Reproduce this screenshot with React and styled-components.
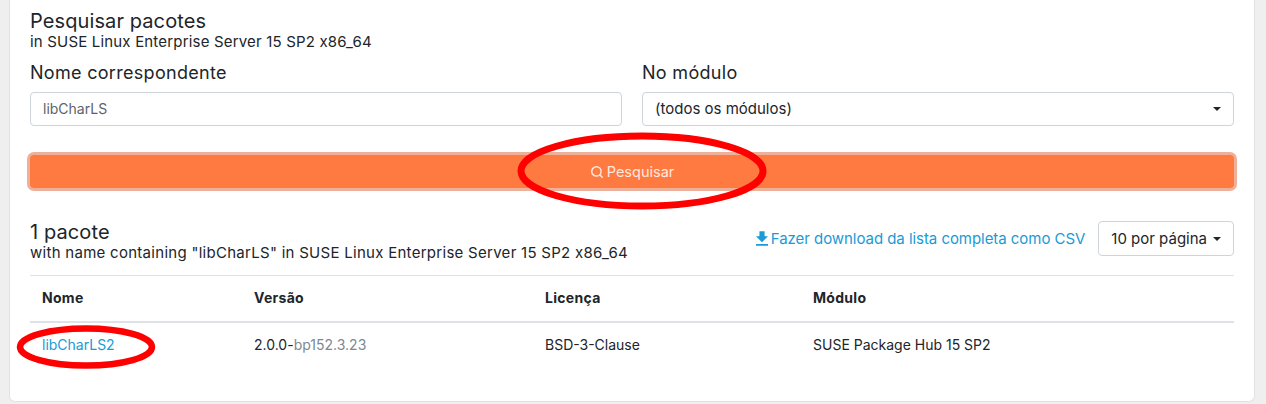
import React from 'react';
import styled, { createGlobalStyle } from 'styled-components';
import { Search } from 'lucide-react';

const GlobalStyle = createGlobalStyle`
  html, body {
    margin: 0;
    padding: 0;
    background: #efefef;
  }
  * { box-sizing: border-box; }
  body {
    font-family: "Inter", "Open Sans", sans-serif;
    color: #212529;
    overflow: hidden;
  }
`;

const Page = styled.div`
  position: relative;
  width: 1266px;
  height: 404px;
  padding: 0 11px 2px 9px;
  overflow: hidden;
`;

const Card = styled.main`
  height: 402px;
  background: #fff;
  border: 1px solid #e2e2e2;
  border-top: 0;
  border-radius: 0 0 6px 6px;
  padding: 10px 20px 0;
`;

const Title = styled.h2`
  margin: 0;
  font-size: 20px;
  line-height: 22px;
  font-weight: 400;
  letter-spacing: 0.1px;
`;

const Subtitle = styled.p`
  margin: 0;
  font-size: 15px;
  line-height: 19px;
  letter-spacing: ${(p) => (p.$wide ? '0.28px' : '0.18px')};
`;

const FormRow = styled.div`
  display: grid;
  grid-template-columns: 592px 592px;
  gap: 20px;
  margin-top: 11px;
`;

const Field = styled.label`
  display: flex;
  flex-direction: column;
  gap: 8px;
  font-size: 18px;
  line-height: 22px;
  letter-spacing: 0.3px;
`;

const Box = styled.div`
  display: flex;
  align-items: center;
  justify-content: space-between;
  height: 34px;
  padding: 0 12px;
  border: 1px solid #ced4da;
  border-radius: 4px;
  background: #fff;
  font-size: ${(p) => (p.$muted ? '14px' : '15px')};
  letter-spacing: 0;
  color: ${(p) => (p.$muted ? '#5c636a' : '#212529')};
`;

const Caret = styled.span`
  width: 0;
  height: 0;
  border-top: 4px solid #212529;
  border-left: 4px solid transparent;
  border-right: 4px solid transparent;
`;

const SearchButton = styled.button`
  display: flex;
  align-items: center;
  justify-content: center;
  gap: 3px;
  width: 100%;
  height: 33px;
  margin-top: 29px;
  border: 0;
  border-radius: 4px;
  background: #ff7a40;
  box-shadow: 0 0 0 3px #eeb098;
  color: #ffe9df;
  font-family: inherit;
  font-size: 14.5px;
`;

const ResultsHeader = styled.div`
  display: flex;
  justify-content: space-between;
  align-items: flex-start;
  margin-top: 33px;
  padding-bottom: 13px;
  border-bottom: 1px solid #dee2e6;
`;

const Actions = styled.div`
  display: flex;
  align-items: center;
  gap: 13px;
`;

const DownloadLink = styled.a`
  display: flex;
  align-items: center;
  gap: 3px;
  color: #1a9ad6;
  font-size: 15px;
  letter-spacing: -0.05px;
`;

const PerPage = styled.div`
  display: flex;
  align-items: center;
  gap: 6px;
  height: 35px;
  padding: 0 12px;
  border: 1px solid #ced4da;
  border-radius: 4px;
  font-size: 15px;
`;

const Table = styled.table`
  width: 100%;
  border-collapse: collapse;
  table-layout: fixed;
  font-size: 14px;
`;

const Th = styled.th`
  width: ${(p) => p.$width}px;
  height: 46px;
  padding: 0 12px 2px;
  text-align: left;
  font-weight: 700;
  letter-spacing: 0.3px;
  border-bottom: 2px solid #dee2e6;
`;

const Td = styled.td`
  height: 45px;
  padding: 0 12px 2px;
`;

const PackageLink = styled.a`
  color: #1a9ad6;
`;

const Muted = styled.span`
  color: #808890;
`;

const Circle = styled.svg`
  position: absolute;
  left: 0;
  top: 0;
  pointer-events: none;
`;

export default function App() {
  return (
    <Page>
      <GlobalStyle />
      <Card>
        <Title>Pesquisar pacotes</Title>
        <Subtitle>in SUSE Linux Enterprise Server 15 SP2 x86_64</Subtitle>
        <FormRow>
          <Field>
            Nome correspondente
            <Box $muted>libCharLS</Box>
          </Field>
          <Field>
            No módulo
            <Box>
              (todos os módulos)
              <Caret />
            </Box>
          </Field>
        </FormRow>
        <SearchButton>
          <Search size={14} strokeWidth={2.6} />
          Pesquisar
        </SearchButton>
        <ResultsHeader>
          <div>
            <Title>1 pacote</Title>
            <Subtitle $wide>with name containing "libCharLS" in SUSE Linux Enterprise Server 15 SP2 x86_64</Subtitle>
          </div>
          <Actions>
            <DownloadLink>
              <svg width="12" height="15" viewBox="5 3 14 17" fill="currentColor">
                <path d="M19 9h-4V3H9v6H5l7 7 7-7zM5 18v2h14v-2H5z" />
              </svg>
              Fazer download da lista completa como CSV
            </DownloadLink>
            <PerPage>
              10 por página
              <Caret />
            </PerPage>
          </Actions>
        </ResultsHeader>
        <Table>
          <thead>
            <tr>
              <Th $width={212}>Nome</Th>
              <Th $width={291}>Versão</Th>
              <Th $width={268}>Licença</Th>
              <Th $width={433}>Módulo</Th>
            </tr>
          </thead>
          <tbody>
            <tr>
              <Td><PackageLink>libCharLS2</PackageLink></Td>
              <Td>2.0.0-<Muted>bp152.3.23</Muted></Td>
              <Td>BSD-3-Clause</Td>
              <Td>SUSE Package Hub 15 SP2</Td>
            </tr>
          </tbody>
        </Table>
      </Card>
      <Circle width="1266" height="404" viewBox="0 0 1266 404">
        <ellipse cx="642" cy="171" rx="121" ry="35" fill="none" stroke="#ff0000" strokeWidth="7" />
        <ellipse cx="86" cy="347" rx="66" ry="18.5" fill="none" stroke="#ff0000" strokeWidth="6.5" />
      </Circle>
    </Page>
  );
}
